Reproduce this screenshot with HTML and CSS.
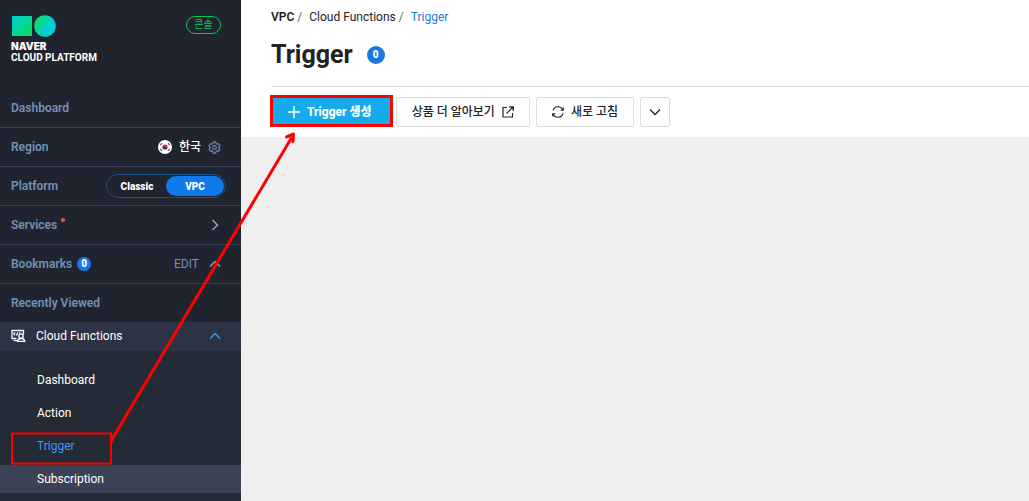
FILE: index.html
```html
<!DOCTYPE html>
<html lang="ko">
<head>
  <meta charset="UTF-8" />
  <meta name="viewport" content="width=device-width, initial-scale=1.0" />
  <title>Trigger - NAVER Cloud Platform</title>
  <link rel="stylesheet" href="styles.css">
</head>
<body>
  <aside class="sidebar">
    <div class="brand">
      <a href="#" class="logo">
        <svg width="46" height="22" viewBox="0 0 46 22" aria-hidden="true">
          <defs>
            <linearGradient id="g1" x1="0" y1="0" x2="1" y2="1">
              <stop offset="0.1" stop-color="#00cfc8" />
              <stop offset="0.9" stop-color="#05dd66" />
            </linearGradient>
            <linearGradient id="g2" x1="0" y1="0.2" x2="1" y2="0.8">
              <stop offset="0.1" stop-color="#0bdc6c" />
              <stop offset="0.6" stop-color="#00d0d0" />
            </linearGradient>
          </defs>
          <rect x="1" y="1" width="20" height="20" fill="url(#g1)" />
          <circle cx="34" cy="11" r="10.8" fill="url(#g2)" />
        </svg>
        <span class="logo-name">NAVER</span>
        <span class="logo-sub">CLOUD PLATFORM</span>
      </a>
      <a href="#" class="console">콘솔</a>
    </div>

    <nav>
      <div class="row"><a href="#">Dashboard</a></div>
      <div class="row">
        <span>Region</span>
        <div class="region">
          <svg width="14" height="14" viewBox="0 0 14 14" aria-hidden="true">
            <circle cx="7" cy="7" r="7" fill="#fff" />
            <path d="M4.400 7a2.600 2.600 0 0 1 5.200 0z" fill="#d8233f" />
            <path d="M4.400 7a2.600 2.600 0 0 0 5.200 0z" fill="#1c3f94" />
            <path d="M2.300 5 4 3.200M10 3.200 11.700 5M2.300 9 4 10.800M10 10.800 11.700 9" stroke="#555" stroke-width="1.200" />
          </svg>
          <span>한국</span>
          <button class="icon-btn" aria-label="Region settings">
            <svg width="13" height="13" viewBox="0 0 14 14" fill="none" stroke="#7391b5" stroke-width="1.200" stroke-linejoin="round">
              <path d="M5.700 1h2.600l.4 1.700 1.200.7 1.700-.5 1.300 2.200-1.200 1.200v1.400l1.200 1.200-1.300 2.200-1.700-.5-1.200.7-.4 1.700H5.700l-.4-1.700-1.200-.7-1.700.5-1.300-2.200 1.200-1.200V6.300L1.100 5.100l1.300-2.200 1.700.5 1.200-.7z" />
              <circle cx="7" cy="7" r="2" />
            </svg>
          </button>
        </div>
      </div>
      <div class="row">
        <span>Platform</span>
        <div class="switch">
          <input type="radio" name="platform" id="classic" />
          <label for="classic">Classic</label>
          <input type="radio" name="platform" id="vpc" checked />
          <label for="vpc">VPC</label>
        </div>
      </div>
      <div class="row">
        <a href="#" class="services">Services<i class="dot"></i></a>
        <svg class="arrow" width="12" height="12" viewBox="0 0 12 12"><path d="M3.500 1l5 5-5 5" /></svg>
      </div>
      <div class="row">
        <a href="#" class="bookmarks">Bookmarks <span class="badge">0</span></a>
        <div class="edit">
          <button>EDIT</button>
          <svg class="arrow" width="12" height="12" viewBox="0 0 12 12"><path d="M1 8.500l5-5 5 5" /></svg>
        </div>
      </div>
      <div class="row last"><span>Recently Viewed</span></div>

      <a href="#" class="service">
        <svg width="15" height="14" viewBox="0 0 15 14" fill="none" stroke="#fff" stroke-width="1.300">
          <path d="M5.500 9.500H1V1.500h11.500v4" />
          <path d="M4 3.500 2.900 5l1.100 1.300M5.500 6.500l1.300-3M8.300 3.300l1 1.200" />
          <path d="M2.500 11.500H6" />
          <circle cx="10" cy="7" r="2.200" />
          <path d="M6.500 12.300c.3-2 1.500-2.800 3.500-2.800s3.500.8 3.800 2.800z" />
        </svg>
        <span>Cloud Functions</span>
        <svg class="arrow active" width="12" height="12" viewBox="0 0 12 12"><path d="M1 8.500l5-5 5 5" /></svg>
      </a>
      <ul class="submenu">
        <li><a href="#">Dashboard</a></li>
        <li><a href="#">Action</a></li>
        <li><a href="#" class="current">Trigger</a></li>
        <li><a href="#" class="hover">Subscription</a></li>
      </ul>
    </nav>
  </aside>

  <main>
    <header>
      <nav class="breadcrumb">
        <a href="#" class="root">VPC</a><i>/</i><a href="#">Cloud Functions</a><i>/</i><a href="#" class="here">Trigger</a>
      </nav>
      <div class="title">
        <h1>Trigger</h1>
        <span class="badge big">0</span>
      </div>
      <div class="toolbar">
        <button class="primary">
          <svg width="12" height="12" viewBox="0 0 12 12" stroke="#fff" stroke-width="1.500"><path d="M6 0v12M0 6h12" /></svg>
          Trigger 생성
        </button>
        <button>
          상품 더 알아보기
          <svg width="12" height="12" viewBox="0 0 12 12" fill="none" stroke="#222" stroke-width="1.200"><path d="M5 1.500H1v9.500h9.500V7M7 .8h4.300V5M11 1 4.500 7.500" /></svg>
        </button>
        <button>
          <svg width="12" height="12" viewBox="0 0 12 12" fill="none" stroke="#222" stroke-width="1.100"><path d="M1 4.500a5.200 5.200 0 0 1 9.800-.5M11.300 1.500V4.300H8.700M11 7.500a5.200 5.200 0 0 1-9.800.5M.7 10.500V7.700h2.600" /></svg>
          새로 고침
        </button>
        <button class="more" aria-label="More">
          <svg width="12" height="12" viewBox="0 0 12 12" fill="none" stroke="#222" stroke-width="1.300"><path d="M1 3.500l5 5 5-5" /></svg>
        </button>
      </div>
    </header>
  </main>

  <!-- guide marks: menu item -> create button -->
  <svg class="guide" width="400" height="470" viewBox="0 0 400 470" fill="none" stroke="#f00" aria-hidden="true">
    <rect x="12" y="433.500" width="99" height="30" stroke-width="2" />
    <rect x="271.500" y="96.500" width="120" height="29" stroke-width="3" />
    <path d="M111 441 292 137" stroke-width="3" />
    <path d="M286.500 137l7-3-.5 7.500" stroke-width="3" stroke-linejoin="round" stroke-linecap="round" />
  </svg>
</body>
</html>
```

FILE: styles.css
```css
* {
  box-sizing: border-box;
}
body {
  font-family: Roboto, "Noto Sans CJK KR", sans-serif;
  font-size: 12px;
  line-height: 16px;
  color: #222;
  margin: 0;
  display: flex;
  min-height: 100vh;
  background-color: #efefef;
  position: relative;
}
a {
  color: inherit;
  text-decoration: none;
}
button {
  font: inherit;
  color: inherit;
  background: none;
  border: none;
  padding: 0;
  cursor: pointer;
}
svg {
  display: block;
  flex: none;
}

/* sidebar */
.sidebar {
  width: 241px;
  flex: none;
  background-color: #20242f;
  color: #7391b5;
  display: flex;
  flex-direction: column;
}
.sidebar > nav {
  flex: 1;
  display: flex;
  flex-direction: column;
}
.brand {
  height: 89px;
  padding: 15px 20px 0 11px;
  display: flex;
  justify-content: space-between;
  align-items: flex-start;
}
.logo {
  font-size: 10px;
  line-height: 11px;
  color: #fff;
}
.logo span {
  display: block;
}
.logo-name {
  font-family: Inter, sans-serif;
  font-weight: 900;
  margin-top: 4px;
}
.logo-sub {
  font-weight: 700;
}
.console {
  border: 1px solid #06c755;
  border-radius: 9px;
  color: #06c755;
  font-size: 10px;
  line-height: 16px;
  width: 35px;
  text-align: center;
  margin-top: 1px;
}
.row {
  height: 39px;
  padding: 0 20px 0 11px;
  border-bottom: 1px solid #344056;
  display: flex;
  align-items: center;
  justify-content: space-between;
  font-weight: 600;
}
.row.last {
  height: 38px;
  border-bottom: none;
}
.region, .edit {
  display: flex;
  align-items: center;
  gap: 7px;
}
.region {
  color: #fff;
  font-weight: 500;
}
.edit {
  gap: 10px;
}
.edit button {
  font-weight: 400;
}
.switch {
  width: 120px;
  height: 24px;
  margin-right: -5px;
  padding: 1px;
  border: 1px solid #1c4f85;
  border-radius: 12px;
  display: flex;
}
.switch input {
  appearance: none;
  width: 0;
  margin: 0;
}
.switch label {
  flex: 1;
  border-radius: 10px;
  text-align: center;
  font-size: 10px;
  line-height: 21px;
  font-weight: 900;
  color: #fff;
}
.switch input:checked + label {
  background-color: #107aea;
}
.services {
  display: flex;
  gap: 4px;
}
.dot {
  width: 4px;
  height: 4px;
  border-radius: 50%;
  background-color: #f4503c;
  margin-top: 1px;
}
.bookmarks {
  display: flex;
  align-items: center;
  gap: 5px;
}
.badge {
  width: 14px;
  height: 14px;
  border-radius: 50%;
  background-color: #107aea;
  color: #fff;
  font-size: 10px;
  line-height: 14px;
  font-weight: 900;
  text-align: center;
}
.arrow {
  fill: none;
  stroke: #8fa3bd;
  stroke-width: 1.5;
}
.arrow.active {
  stroke: #3b96ff;
  margin-left: auto;
}
.service {
  height: 29px;
  padding: 0 20px 2px 11px;
  display: flex;
  align-items: center;
  gap: 10px;
  background-color: #2c3344;
  color: #fff;
}
.submenu {
  flex: 1;
  list-style: none;
  margin: 0;
  padding: 15px 0 8px;
  display: flex;
  flex-direction: column;
  gap: 5px;
  background-color: #252b36;
  color: #fff;
}
.submenu a {
  display: block;
  padding: 0 37px;
  line-height: 28px;
}
.submenu .current {
  color: #3b96ff;
}
.submenu .hover {
  background-color: #3b4256;
}

/* content */
main {
  flex: 1;
}
main header {
  background-color: #fff;
  padding: 9px 0 10px 30px;
}
.breadcrumb i {
  font-style: normal;
  color: #666;
  margin: 0 7px 0 3px;
}
.breadcrumb .root {
  font-weight: 600;
}
.breadcrumb .here {
  color: #1a7ad9;
}
.title {
  display: flex;
  align-items: center;
  gap: 14px;
  padding: 14px 0 15px;
  border-bottom: 1px solid #ddd;
}
h1 {
  font-size: 25px;
  line-height: 32px;
  font-weight: 700;
  margin: 0;
}
.badge.big {
  width: 18px;
  height: 18px;
  line-height: 18px;
  background-color: #1a7ad9;
}
.toolbar {
  display: flex;
  gap: 6px;
  padding-top: 10px;
}
.toolbar button {
  height: 30px;
  padding: 0 15px;
  border: 1px solid #ddd;
  border-radius: 2px;
  background-color: #fff;
  font-weight: 500;
  display: flex;
  align-items: center;
  gap: 7px;
}
.toolbar .primary {
  background-color: #15aaea;
  border-color: #15aaea;
  color: #fff;
  font-weight: 800;
  padding: 0 17px 0 16px;
}
.toolbar .more {
  padding: 0 8px;
}

.guide {
  position: absolute;
  left: 0;
  top: 0;
  pointer-events: none;
}
```
